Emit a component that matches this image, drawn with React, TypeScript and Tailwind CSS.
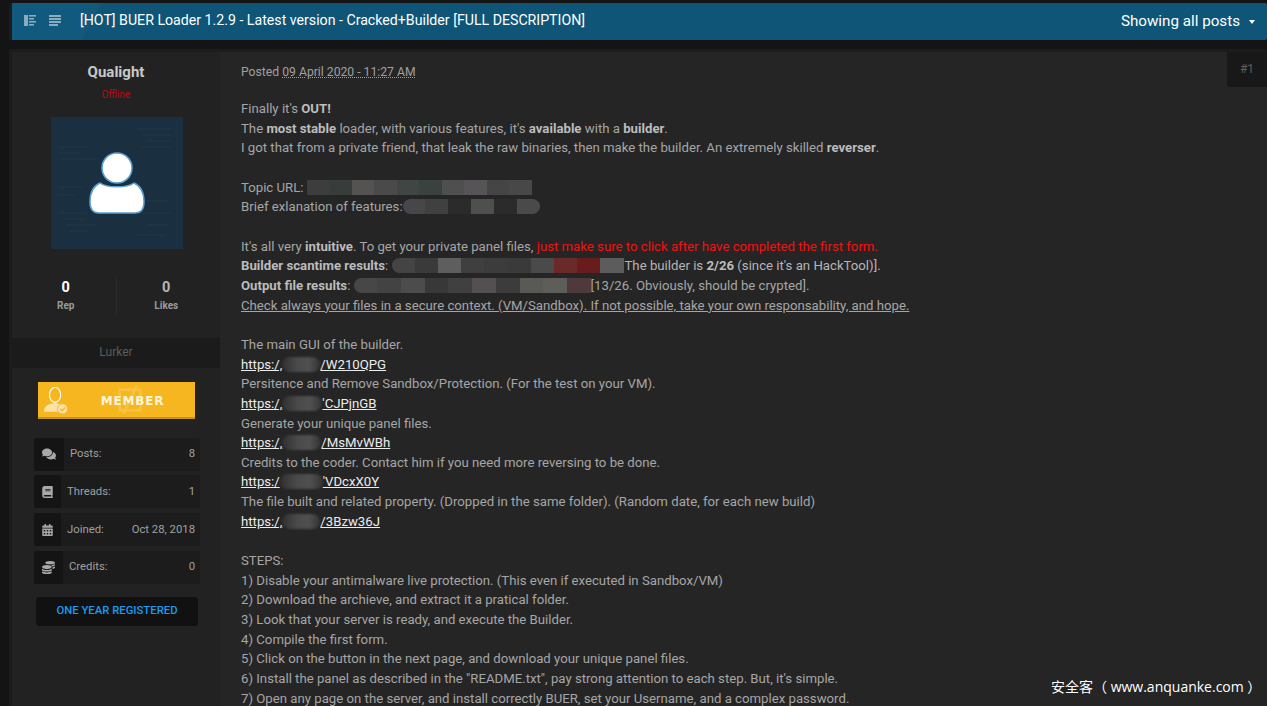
import React from 'react';
import { FaComments, FaBook, FaCalendarAlt, FaCoins } from 'react-icons/fa';

const stats = [
  { label: 'Posts:', value: '8', icon: 'posts', w: 'w-[30px]' },
  { label: 'Threads:', value: '1', icon: 'threads', w: 'w-[27px]' },
  { label: 'Joined:', value: 'Oct 28, 2018', icon: 'joined', w: 'w-[27px]' },
  { label: 'Credits:', value: '0', icon: 'credits', w: 'w-[29px]' },
];

const StatIcon = ({ name }: { name: string }) => {
  if (name === 'posts') return <FaComments className="h-[14px] w-[14px] text-[#a8a8a8]" />;
  if (name === 'threads') return <FaBook className="h-[12px] w-[11px] text-[#a8a8a8]" />;
  if (name === 'joined') return <FaCalendarAlt className="h-[12px] w-[11px] text-[#a8a8a8]" />;
  return <FaCoins className="h-[13px] w-[13px] text-[#a8a8a8]" />;
};

// pixelated redaction block, one span per mosaic tile
const Blur = ({ tiles, width, className = '' }: { tiles: string[]; width: number; className?: string }) => (
  <span className={`inline-flex h-[15px] align-[-3px] overflow-hidden ${className}`} style={{ width }}>
    {tiles.map((c, i) => (
      <span key={i} className="h-full flex-1" style={{ background: c }} />
    ))}
  </span>
);

const Link2 = ({ pre, blur, post }: { pre: string; blur: number; post: string }) => (
  <div className="text-[#ececec]">
    <span className="underline">{pre}</span>
    <span className="inline-block h-[15px] align-[-3px] rounded-full bg-[linear-gradient(90deg,#303030,#4a4a4a_40%,#505050_70%,#343434)] blur-[1px]" style={{ width: blur }} />
    <span className="underline">{post}</span>
  </div>
);

const PersonIcon = () => (
  <svg viewBox="0 0 60 70" className="mt-[5px] h-[70px] w-[60px]">
    <circle cx="30" cy="18" r="15" fill="#fff" stroke="#5f9fd0" strokeWidth="1.5" />
    <path
      d="M13 33 C20 38 40 38 47 33 C54 36 57 44 57 52 C57 60 54 63 48 63 L12 63 C6 63 3 60 3 52 C3 44 6 36 13 33 Z"
      fill="#fff"
      stroke="#5f9fd0"
      strokeWidth="1.5"
    />
  </svg>
);

const App = () => {
  return (
    <div className="h-[706px] w-[1267px] overflow-hidden bg-[#141414] pl-[9px] pt-[3px] text-[14px] leading-[19.66px] text-[#a6a6a6] [font-family:Roboto,sans-serif]">
      {/* thread header */}
      <div className="flex h-[37px] items-center justify-between rounded-[2px] border-l-[3px] border-[#1c1c1c] bg-[linear-gradient(118deg,#12597e_0,#12597e_7%,#0e5577_7%)] pr-[12px] pl-[12px]">
        <div className="flex items-center pb-[3px]">
          <svg viewBox="0 0 12 11" className="h-[11px] w-[12px]" fill="#8aacbc">
            <rect x="0" y="0" width="4" height="11" />
            <rect x="5" y="0" width="7" height="1.6" />
            <rect x="5" y="3" width="5" height="1.6" />
            <rect x="5" y="6" width="7" height="1.6" />
            <rect x="5" y="9" width="5" height="1.6" />
          </svg>
          <svg viewBox="0 0 12 11" className="ml-[13px] h-[11px] w-[12px]" fill="#8aacbc">
            <rect x="0" y="0" width="12" height="2" />
            <rect x="0" y="3" width="12" height="2" />
            <rect x="0" y="6" width="12" height="2" />
            <rect x="0" y="9" width="9" height="2" />
          </svg>
          <span className="ml-[19px] pt-[2px] text-[14.17px] text-white">
            [HOT] BUER Loader 1.2.9 - Latest version - Cracked+Builder [FULL DESCRIPTION]
          </span>
        </div>
        <div className="flex items-center text-[15.2px] text-white">
          Showing all posts
          <span className="ml-[9px] h-0 w-0 border-x-[3.5px] border-t-[4px] border-x-transparent border-t-white" />
        </div>
      </div>

      {/* post */}
      <div className="mt-[9px] flex h-[700px] rounded-t-[2px] border-t-[3px] border-l-[3px] border-[#1c1c1c] bg-[#252525]">
        <aside className="w-[208px] shrink-0 bg-[#222222]">
          <div className="mt-[11px] text-center text-[15px] font-bold text-[#c8c8c8]">Qualight</div>
          <div className="mt-[5px] text-center text-[10px] leading-[14px] text-[#b0101a]">Offline</div>
          <div className="relative ml-[39px] mt-[15px] flex h-[132px] w-[132px] items-center justify-center overflow-hidden bg-[#1a3040]">
            <svg viewBox="0 0 132 132" className="absolute inset-0 h-full w-full" stroke="#1f3848" strokeWidth="1">
              <path d="M8 30h30M8 36h22M10 42h34M86 12h34M92 18h28M96 24h24M90 30h30M8 70h24M6 78h18M8 96h28M12 102h22M14 108h30M18 114h18M92 84h26M88 96h32M96 108h20M84 118h30" />
            </svg>
            <div className="relative">
              <PersonIcon />
            </div>
          </div>

          <div className="mt-[29px] flex h-[37px]">
            <div className="flex-1 pl-[4px] text-center">
              <div className="text-[14.5px] font-bold leading-[20px] text-white">0</div>
              <div className="text-[10px] font-bold leading-[16px] text-[#9a9a9a]">Rep</div>
            </div>
            <div className="w-px bg-[#2b2b2b]" />
            <div className="flex-1 pr-[4px] text-center">
              <div className="text-[14.5px] font-bold leading-[20px] text-[#b5b5b5]">0</div>
              <div className="text-[10px] font-bold leading-[16px] text-[#9a9a9a]">Likes</div>
            </div>
          </div>

          <div className="mt-[23px] flex h-[30px] items-center justify-center bg-[#1b1b1b] text-[12px] text-[#5c5c5c]">
            Lurker
          </div>

          <div className="relative ml-[26px] mt-[14px] flex h-[37px] w-[157px] items-center justify-center border-b-2 border-[#c9921a] bg-[#f5b620]">
            <svg viewBox="0 0 28 30" className="absolute left-[5px] top-[4px] h-[29px] w-[26px]">
              <ellipse cx="13" cy="9" rx="6" ry="8" fill="none" stroke="#fff" strokeWidth="1.2" />
              <path d="M1 27 C1 20 8 18 13 18 C18 18 24 20 24 27 Z" fill="#fbe3a8" />
              <circle cx="21" cy="24" r="5.5" fill="#fbe3a8" stroke="#f5b620" />
              <path d="M18.5 24 L20.5 26 L24 22.5" fill="none" stroke="#f5b620" strokeWidth="1.5" />
            </svg>
            <svg viewBox="0 0 30 34" className="absolute left-[78px] top-[2px] h-[32px] w-[28px]" fill="none" stroke="#f7c240" strokeWidth="3">
              <rect x="4" y="6" width="22" height="22" />
              <path d="M8 32 L22 2" />
            </svg>
            <span className="relative ml-[32px] mt-[6px] text-[12px] font-bold tracking-[0.8px] text-[#fff6dc] [font-family:'DejaVu_Sans',sans-serif]">MEMBER</span>
          </div>

          <div className="ml-[22px] mt-[19px] flex w-[166px] flex-col gap-[4.7px]">
            {stats.map((s) => (
              <div key={s.label} className="flex h-[33px] items-center rounded-[2px] bg-[#1c1c1c] pr-[5px] text-[11.3px] text-[#a0a0a0]">
                <div className={`flex h-full items-center justify-center rounded-l-[2px] bg-[#141414] ${s.w}`}>
                  <StatIcon name={s.icon} />
                </div>
                <span className="ml-[6px]">{s.label}</span>
                <span className="ml-auto">{s.value}</span>
              </div>
            ))}
          </div>

          <div className="ml-[24px] mt-[13px] flex h-[29px] w-[162px] items-center justify-center rounded-[3px] bg-[#111] text-[11.3px] font-medium text-[#1a9cf0]">
            ONE YEAR REGISTERED
          </div>
        </aside>

        <main className="relative min-w-0 flex-1 pl-[21px]">
          <div className="absolute right-0 top-0 flex h-[35px] w-[40px] items-center justify-center rounded-bl-[3px] bg-[#181818] text-[12px] text-[#5f5f5f]">
            #1
          </div>
          <div className="pt-[10px] text-[12.2px] leading-[20px] text-[#a0a0a0]">
            Posted <span className="underline decoration-dotted">09 April 2020 - 11:27 AM</span>
          </div>
          <div className="mt-[17px] text-[13.2px] whitespace-nowrap">
            <div>Finally it's <b className="text-[#bcbcbc]">OUT!</b></div>
            <div>The <b className="text-[#bcbcbc]">most stable</b> loader, with various features, it's <b className="text-[#bcbcbc]">available</b> with a <b className="text-[#bcbcbc]">builder</b>.</div>
            <div>I got that from a private friend, that leak the raw binaries, then make the builder. An extremely skilled <b className="text-[#bcbcbc]">reverser</b>.</div>
            <div className="h-[19.66px]" />
            <div>
              Topic URL: <Blur width={225} tiles={['#3d3d3d', '#383d3b', '#555352', '#4a4a4a', '#3f4644', '#3a4240', '#4f4f4f', '#565456', '#454545', '#484848']} />
            </div>
            <div>
              Brief exlanation of features:<Blur width={137} className="rounded-full" tiles={['#474749', '#404040', '#2b2b2b', '#4e504e', '#2b2b2b', '#4a4a4a']} />
            </div>
            <div className="h-[19.66px]" />
            <div>
              It's all very <b className="text-[#bcbcbc]">intuitive</b>. To get your private panel files, <span className="text-[#f50f0f]">just make sure to click after have completed the first form.</span>
            </div>
            <div>
              <b className="text-[#bcbcbc]">Builder scantime results</b>: <Blur width={232} className="rounded-l-full" tiles={['#444', '#3a3a3a', '#5e5e5e', '#3f3f3f', '#3c3c3c', '#3a3a3a', '#4a4a4a', '#6a2a2a', '#6a1c1c', '#5c5c5c']} />
              <span className="ml-[1px] text-[#b5b5b5]">The builder is <b className="text-[#bcbcbc]">2/26</b> (since it's an HackTool)].</span>
            </div>
            <div>
              <b className="text-[#bcbcbc]">Output file results</b>: <Blur width={237} className="rounded-l-full" tiles={['#474747', '#434343', '#4c4c4c', '#383838', '#404040', '#545052', '#3c3c3c', '#595a55', '#5e5e58', '#4e3a3a']} />
              [13/26. Obviously, should be crypted].
            </div>
            <div className="underline">Check always your files in a secure context. (VM/Sandbox). If not possible, take your own responsability, and hope.</div>
            <div className="h-[19.66px]" />
            <div>The main GUI of the builder.</div>
            <Link2 pre="https:/," blur={38} post="/W210QPG" />
            <div>Persitence and Remove Sandbox/Protection. (For the test on your VM).</div>
            <Link2 pre="https:/," blur={40} post="'CJPjnGB" />
            <div>Generate your unique panel files.</div>
            <Link2 pre="https:/," blur={39} post="/MsMvWBh" />
            <div>Credits to the coder. Contact him if you need more reversing to be done.</div>
            <Link2 pre="https:/" blur={43} post="'VDcxX0Y" />
            <div>The file built and related property. (Dropped in the same folder). (Random date, for each new build)</div>
            <Link2 pre="https:/," blur={38} post="/3Bzw36J" />
            <div className="h-[19.66px]" />
            <div>STEPS:</div>
            <div>1) Disable your antimalware live protection. (This even if executed in Sandbox/VM)</div>
            <div>2) Download the archieve, and extract it a pratical folder.</div>
            <div>3) Look that your server is ready, and execute the Builder.</div>
            <div>4) Compile the first form.</div>
            <div>5) Click on the button in the next page, and download your unique panel files.</div>
            <div>6) Install the panel as described in the "README.txt", pay strong attention to each step. But, it's simple.</div>
            <div>7) Open any page on the server, and install correctly BUER, set your Username, and a complex password.</div>
          </div>
          {/* site watermark */}
          <div className="absolute left-[831px] top-[625px] whitespace-nowrap text-[14px] text-white [font-family:'Open_Sans','Noto_Sans_CJK_SC',sans-serif]">
            安全客（ www.anquanke.com ）
          </div>
        </main>
      </div>
    </div>
  );
};

export default App;
